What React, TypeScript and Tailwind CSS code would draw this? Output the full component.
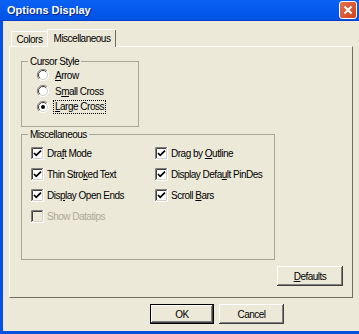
import type { ReactNode } from "react";

const font = { fontFamily: '"Liberation Sans", Arial, sans-serif' };

function U({ children }: { children: ReactNode }) {
  return <span className="underline underline-offset-[1px]">{children}</span>;
}

function Radio({ checked, focus, children }: { checked?: boolean; focus?: boolean; children: ReactNode }) {
  return (
    <div className="flex h-[16px] items-center gap-[4px]">
      <svg width="12" height="12" viewBox="0 0 12 12" className="shrink-0">
        <circle cx="6" cy="6" r="5.5" fill="#ffffff" />
        <path d="M10 2 A5.5 5.5 0 0 0 2 10" fill="none" stroke="#808080" strokeWidth="1" />
        <path d="M9.2 2.8 A4.5 4.5 0 0 0 2.8 9.2" fill="none" stroke="#404040" strokeWidth="1" />
        <path d="M10 2 A5.5 5.5 0 0 1 2 10" fill="none" stroke="#ffffff" strokeWidth="1" />
        <path d="M9.2 2.8 A4.5 4.5 0 0 1 2.8 9.2" fill="none" stroke="#d4d0c8" strokeWidth="1" />
        {checked && <circle cx="6" cy="6" r="2" fill="#000000" />}
      </svg>
      <span className={focus ? "border border-dotted border-black px-[1px] leading-[12px]" : "px-[2px]"}>{children}</span>
    </div>
  );
}

function Check({ checked, disabled, children }: { checked?: boolean; disabled?: boolean; children: ReactNode }) {
  return (
    <div className="flex h-[21px] items-center gap-[3px]">
      <svg width="13" height="13" viewBox="0 0 13 13" className="shrink-0">
        <rect x="0" y="0" width="13" height="13" fill="#ffffff" />
        <rect x="2" y="2" width="9" height="9" fill={disabled ? "#ece9d8" : "#ffffff"} />
        <path d="M0.5 12 V0.5 H12" fill="none" stroke="#808080" />
        <path d="M1.5 11 V1.5 H11" fill="none" stroke="#404040" />
        <path d="M1.5 11.5 H11.5 V1" fill="none" stroke="#d4d0c8" />
        {checked && <path d="M3 6 L5.2 8.3 L10 3.6" fill="none" stroke="#000000" strokeWidth="1.8" />}
      </svg>
      <span className={disabled ? "text-[#aca899]" : ""}>{children}</span>
    </div>
  );
}

const btn =
  "flex items-center justify-center bg-[#ece9d8] shadow-[inset_-1px_-1px_0_#404040,inset_1px_1px_0_#ffffff,inset_-2px_-2px_0_#808080]";

export default function App() {
  return (
    <div className="flex h-[334px] w-[359px] flex-col overflow-hidden bg-[#ece9d8] text-[10px] tracking-[-0.5px] text-black" style={font}>
      <div className="flex h-[21px] shrink-0 items-center justify-between border-b border-[#0040c8] bg-gradient-to-b from-[#0a62f4] to-[#0052e4] pl-[7px] pr-[2px]">
        <span className="text-[11px] font-bold tracking-normal text-white [text-shadow:1px_1px_#0a1e8c]">Options Display</span>
        <div className="flex h-[18px] w-[18px] items-center justify-center rounded-[3px] border border-white bg-gradient-to-br from-[#e8704c] to-[#d0401c]">
          <svg width="10" height="10" viewBox="0 0 10 10">
            <path d="M1.5 1.5 L8.5 8.5 M8.5 1.5 L1.5 8.5" stroke="#ffffff" strokeWidth="2" />
          </svg>
        </div>
      </div>

      <div className="flex flex-1 flex-col border-b-[3px] border-l-[3px] border-[#0a50e0] pl-[6px] pt-[8px]">
        <div className="flex h-[17px] items-end">
          <div className="ml-[2px] flex h-[15px] w-[36px] items-center justify-center border-l border-t border-white">
            Colors
          </div>
          <div className="relative z-10 -mb-px flex h-[18px] w-[69px] items-center justify-center border-l border-t border-white bg-[#ece9d8] shadow-[inset_-1px_0_0_#716f64]">
            Miscellaneous
          </div>
        </div>

        <div className="flex h-[252px] w-[344px] flex-col border-b border-l border-r border-t border-b-[#716f64] border-l-white border-r-[#716f64] border-t-white">
          <fieldset className="ml-[11px] mt-[9px] h-[71px] w-[118px] border border-[#a8a698]">
            <legend className="ml-[6px] px-[2px] leading-[11px]">Cursor Style</legend>
            <div className="flex flex-col pl-[15px]">
              <Radio>
                <U>A</U>rrow
              </Radio>
              <Radio>
                S<U>m</U>all Cross
              </Radio>
              <Radio checked focus>
                <U>L</U>arge Cross
              </Radio>
            </div>
          </fieldset>

          <fieldset className="ml-[11px] mt-[2px] h-[131px] w-[254px] border border-[#a8a698]">
            <legend className="ml-[6px] px-[2px] leading-[11px]">Miscellaneous</legend>
            <div className="grid grid-cols-[124px_1fr] pl-[9px] pt-[3px]">
              <Check checked>
                Dra<U>f</U>t Mode
              </Check>
              <Check checked>
                Dra<U>g</U> by <U>O</U>utline
              </Check>
              <Check checked>
                Thin Stro<U>k</U>ed Text
              </Check>
              <Check checked>
                Display Defa<U>u</U>lt PinDes
              </Check>
              <Check checked>
                Dis<U>p</U>lay Open Ends
              </Check>
              <Check checked>
                Scroll <U>B</U>ars
              </Check>
              <Check disabled>Show Datatips</Check>
            </div>
          </fieldset>

          <div className={`${btn} ml-[267px] mt-[6px] h-[20px] w-[66px]`}>
            <U>D</U>efaults
          </div>
        </div>

        <div className="mt-[6px] flex">
          <div className={`${btn} ml-[141px] h-[20px] w-[64px] border border-black`}>OK</div>
          <div className={`${btn} ml-[5px] h-[20px] w-[65px]`}>Cancel</div>
        </div>
      </div>
    </div>
  );
}
